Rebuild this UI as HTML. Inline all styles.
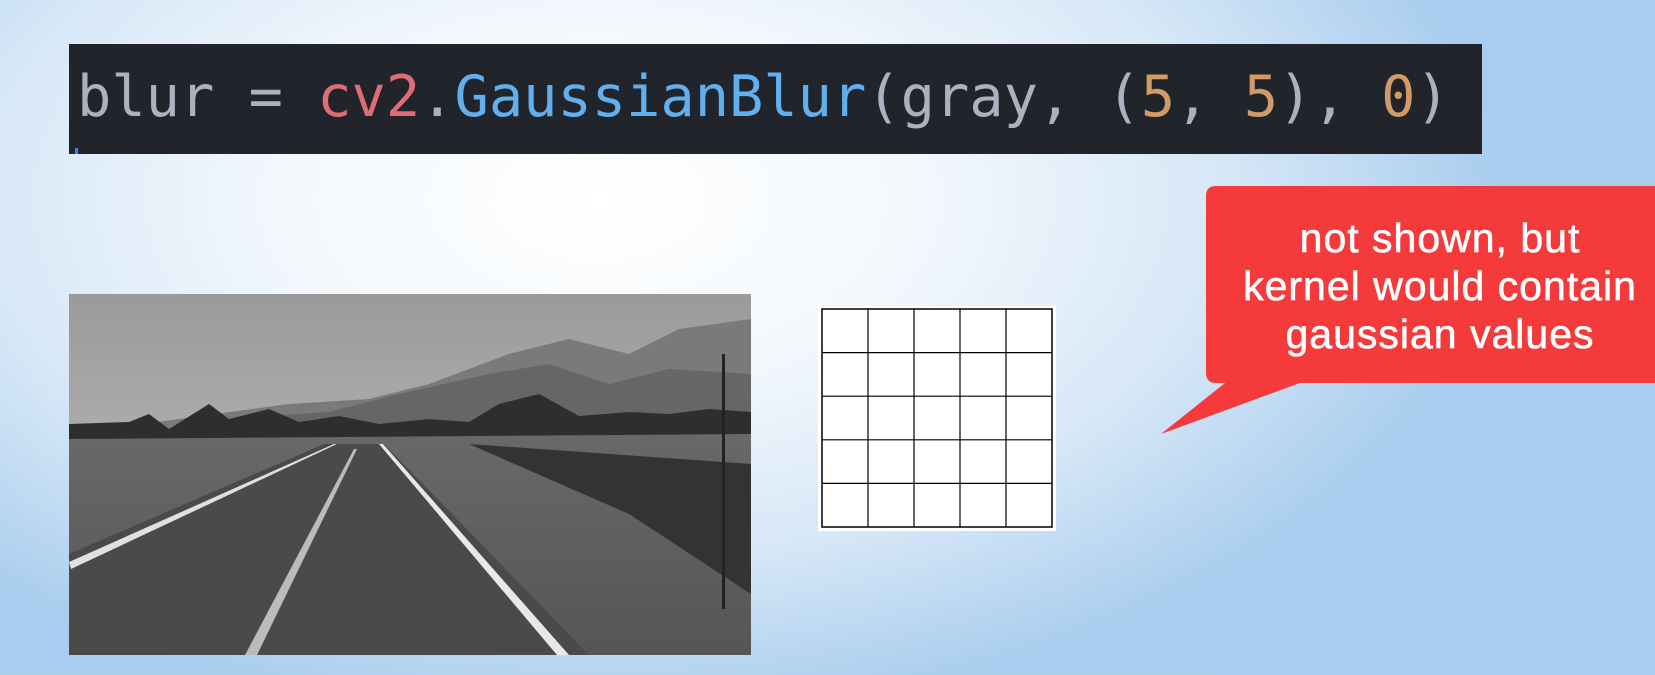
<!DOCTYPE html>
<html><head><style>
html,body{margin:0;padding:0}
body{width:1655px;height:675px;overflow:hidden;position:relative;
background:radial-gradient(ellipse 900px 520px at 600px 200px,#ffffff 0%,#f3f8fd 35%,#d6e7f7 70%,#a9cdee 100%);
background-color:#b9d6f1;font-family:"Liberation Sans",sans-serif}
.code{position:absolute;left:69px;top:44px;width:1413px;height:110px;background:#21252b}
.code pre{margin:0;position:absolute;left:8px;top:18px;font-family:"DejaVu Sans Mono","Liberation Mono",monospace;font-size:57px;line-height:70px;color:#abb2bf}
.r{color:#e06c75}.b{color:#61afef}.o{color:#d19a66}
.cur{position:absolute;left:6px;top:104px;width:3px;height:6px;background:#3b82f6}
.photo{position:absolute;left:69px;top:294px;width:682px;height:361px}
.grid{position:absolute;left:818px;top:306px;width:238px;height:225px;background:#fff}
.bubble{position:absolute;left:0;top:0}
.bt{position:absolute;left:1214px;top:214px;width:452px;text-align:center;color:#fff;font-size:41px;letter-spacing:1px;line-height:48px;-webkit-text-stroke:0.6px #fff}
</style></head><body>
<div class="code"><pre>blur = <span class="r">cv2</span>.<span class="b">GaussianBlur</span>(gray, (<span class="o">5</span>, <span class="o">5</span>), <span class="o">0</span>)</pre><div class="cur"></div></div>

<svg class="photo" viewBox="0 0 682 361" preserveAspectRatio="none">
<defs><linearGradient id="sky" x1="0" y1="0" x2="0" y2="1"><stop offset="0" stop-color="#9a9a9a"/><stop offset="1" stop-color="#c8c8c8"/></linearGradient>
<linearGradient id="gr" x1="0" y1="0" x2="0" y2="1"><stop offset="0" stop-color="#6a6a6a"/><stop offset="1" stop-color="#555"/></linearGradient></defs>
<rect width="682" height="361" fill="url(#sky)"/>
<path d="M0 140 L220 110 L300 105 L360 90 L440 60 L500 45 L560 60 L610 35 L682 25 L682 170 L0 170Z" fill="#7a7a7a"/>
<path d="M140 140 L200 122 L260 118 L330 100 L420 80 L480 70 L540 90 L600 75 L682 80 L682 160 L140 160Z" fill="#666"/>
<path d="M0 140 L682 125 L682 361 L0 361Z" fill="url(#gr)"/>
<path d="M0 130 L60 128 L80 120 L100 135 L140 110 L160 125 L200 115 L230 128 L270 122 L310 130 L360 125 L400 128 L430 110 L470 100 L510 122 L560 118 L600 120 L640 115 L682 118 L682 140 L0 145Z" fill="#2e2e2e"/>
<path d="M0 260 L255 150 L315 150 L520 361 L0 361Z" fill="#4a4a4a"/>
<path d="M0 268 L265 150 L268 150 L2 275Z" fill="#e0e0e0"/>
<path d="M310 150 L314 150 L500 361 L488 361Z" fill="#e8e8e8"/>
<path d="M285 155 L288 155 L188 361 L176 361Z" fill="#bbb"/>
<path d="M400 150 L682 170 L682 300 L560 220Z" fill="#333"/>
<rect x="653" y="60" width="3" height="255" fill="#222"/>
</svg>

<svg class="grid" viewBox="0 0 238 225">
<rect x="4" y="3" width="230" height="218" fill="#fff" stroke="#000" stroke-width="1.5"/>
<g stroke="#000" stroke-width="1.2">
<line x1="50" y1="3" x2="50" y2="221"/><line x1="96" y1="3" x2="96" y2="221"/><line x1="142" y1="3" x2="142" y2="221"/><line x1="188" y1="3" x2="188" y2="221"/>
<line x1="4" y1="46.6" x2="234" y2="46.6"/><line x1="4" y1="90.2" x2="234" y2="90.2"/><line x1="4" y1="133.8" x2="234" y2="133.8"/><line x1="4" y1="177.4" x2="234" y2="177.4"/>
</g></svg>

<svg class="bubble" width="1655" height="675">
<path d="M1216 186 L1655 186 L1655 383 L1300 383 L1161 434 L1225 383 L1216 383 Q1206 383 1206 373 L1206 196 Q1206 186 1216 186Z" fill="#f53a3c"/>
</svg>
<div class="bt">not shown, but<br>kernel would contain<br>gaussian values</div>
</body></html>
